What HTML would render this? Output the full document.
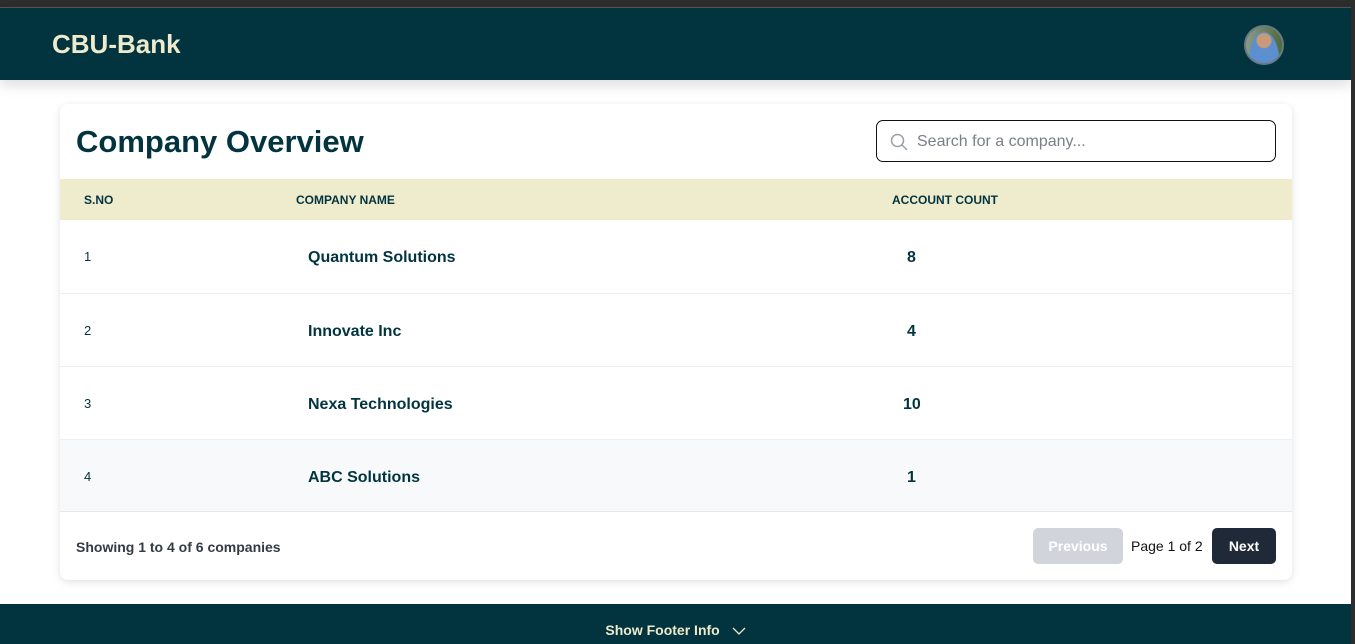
<!DOCTYPE html>
<html><head><meta charset="utf-8"><style>
*{box-sizing:border-box;margin:0;padding:0}
body{width:1355px;height:644px;overflow:hidden;background:#fff;font-family:"Liberation Sans",sans-serif;position:relative}
.top{position:absolute;left:0;top:0;width:1355px;height:8px;background:#2d2d2d;border-bottom:1px solid #555}
.hdr{position:absolute;left:0;top:8px;width:1351px;height:72px;background:#023440;box-shadow:0 6px 12px rgba(0,0,0,.12)}
.hdr .logo{position:absolute;left:52px;top:21px;font-size:26px;font-weight:bold;color:#eeeacb}
.av{position:absolute;left:1244px;top:17px;width:40px;height:40px;border-radius:50%;border:2px solid #6b7a80;background:radial-gradient(circle at 50% 38%,#c99a7a 0 7px,transparent 8px),radial-gradient(ellipse at 50% 100%,#5b8fd0 0 15px,transparent 16px),linear-gradient(90deg,#8a9a8a,#4d6b3a)}
.sb{position:absolute;right:0;top:0;width:4px;height:644px;background:#2d2d2d}
.card{position:absolute;left:60px;top:104px;width:1232px;height:476px;background:#fff;border-radius:8px;box-shadow:0 2px 8px rgba(0,0,0,.12);overflow:hidden}
h1{position:absolute;left:16px;top:20px;font-size:31px;font-weight:bold;color:#023440}
.search{position:absolute;left:816px;top:16px;width:400px;height:42px;border:1.5px solid #111;border-radius:7px}
.search span{position:absolute;left:40px;top:12px;font-size:16px;color:#7a7f88}
.search svg{position:absolute;left:13px;top:12px}
.th{position:absolute;left:0;top:75px;width:1232px;height:41px;background:#efebcd;font-size:12px;font-weight:bold;color:#023440}
.th div,.row div{position:absolute}
.row{position:absolute;left:0;width:1232px;height:73px;border-top:1px solid #eceef0;color:#023440}
.row .n{left:24px;top:29px;font-size:13px}
.row .c{left:248px;top:29px;font-size:16px;font-weight:bold}
.row .a{left:847px;top:29px;font-size:16px;font-weight:bold}
.ft{position:absolute;left:0;top:407px;width:1232px;height:69px;border-top:1px solid #e5e7eb}
.ft .s{position:absolute;left:16px;top:27px;font-size:14px;font-weight:bold;color:#333b44}
.btn{position:absolute;top:16px;height:36px;border-radius:5px;font-size:14px;font-weight:bold;color:#fff;text-align:center;line-height:36px}
.pg{position:absolute;left:1071px;top:26px;font-size:14px;color:#111}
.foot{position:absolute;left:0;top:604px;width:1351px;height:40px;background:#023440;color:#eeeacb;font-size:14px;font-weight:bold;text-align:center;padding-top:18px}
</style></head><body>
<div class="top"></div>
<div class="hdr"><div class="logo">CBU-Bank</div><div class="av"></div></div>
<div class="sb"></div>
<div class="card">
<h1>Company Overview</h1>
<div class="search"><svg width="18" height="18" viewBox="0 0 18 18"><circle cx="7.5" cy="7.5" r="6" fill="none" stroke="#9aa0a8" stroke-width="1.5"/><line x1="12" y1="12" x2="17" y2="17" stroke="#9aa0a8" stroke-width="1.5"/></svg><span>Search for a company...</span></div>
<div class="th"><div style="left:24px;top:14px">S.NO</div><div style="left:236px;top:14px">COMPANY NAME</div><div style="left:832px;top:14px">ACCOUNT COUNT</div></div>
<div class="row" style="top:116px;border-top:none"><div class="n">1</div><div class="c">Quantum Solutions</div><div class="a">8</div></div>
<div class="row" style="top:189px"><div class="n">2</div><div class="c">Innovate Inc</div><div class="a">4</div></div>
<div class="row" style="top:262px"><div class="n">3</div><div class="c">Nexa Technologies</div><div class="a" style="left:843px">10</div></div>
<div class="row" style="top:335px;background:#f8f9fa"><div class="n">4</div><div class="c">ABC Solutions</div><div class="a">1</div></div>
<div class="ft"><div class="s">Showing 1 to 4 of 6 companies</div>
<div class="btn" style="left:973px;width:90px;background:#d1d5db">Previous</div>
<div class="pg">Page 1 of 2</div>
<div class="btn" style="left:1152px;width:64px;background:#1f2937">Next</div></div>
</div>
<div class="foot">Show Footer Info <svg width="14" height="8" viewBox="0 0 14 8" style="margin-left:8px"><polyline points="1,1 7,7 13,1" fill="none" stroke="#eeeacb" stroke-width="1.3"/></svg></div>
</body></html>
